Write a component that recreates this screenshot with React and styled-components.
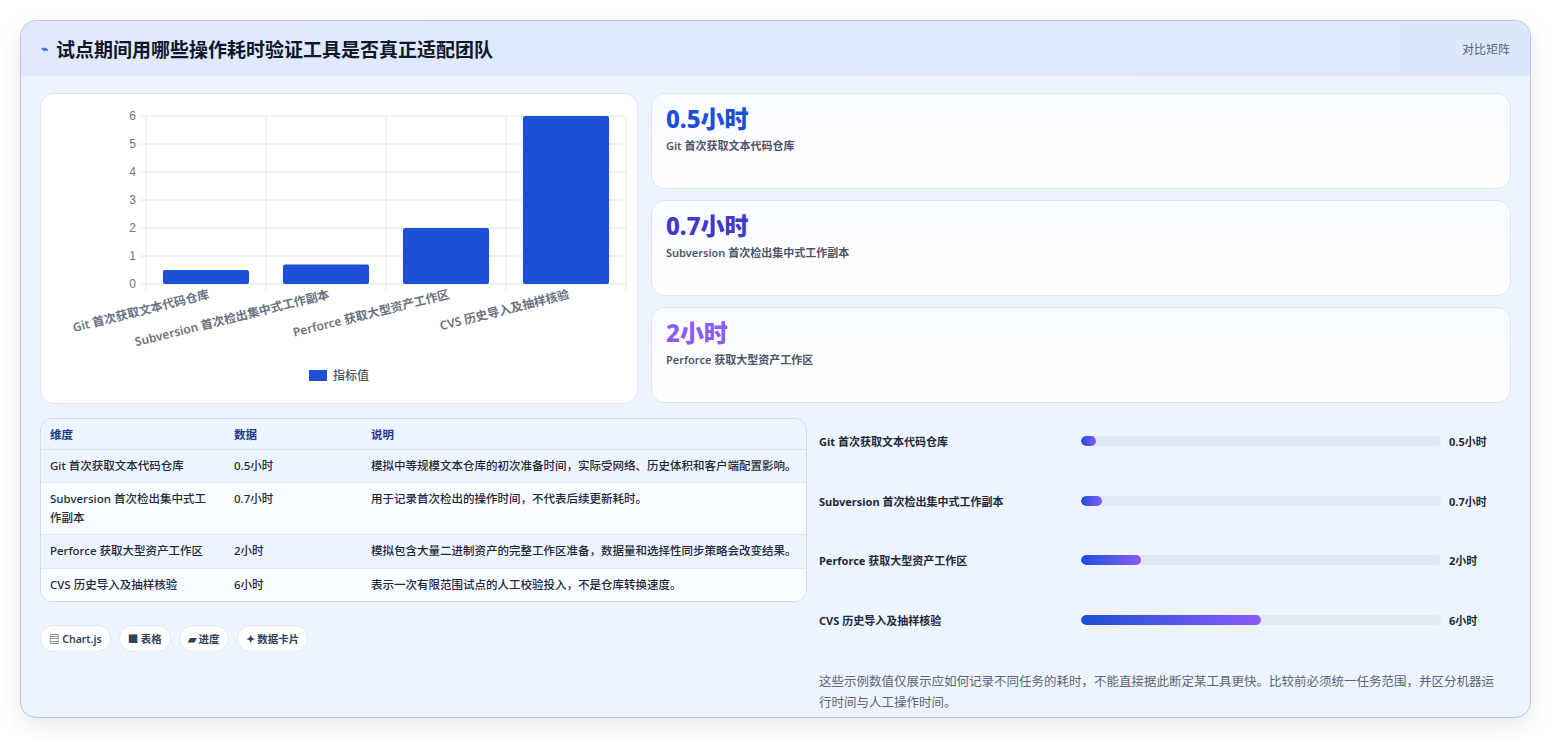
import React from "react";
import styled, { createGlobalStyle } from "styled-components";

const FONT = `"Noto Sans", "Noto Sans CJK SC", sans-serif`;

const Global = createGlobalStyle`
	body { margin: 0; background: #fff; font-family: ${ FONT }; }
`;

const rows = [
	{ name: "Git 首次获取文本代码仓库", value: 0.5, note: "模拟中等规模文本仓库的初次准备时间，实际受网络、历史体积和客户端配置影响。" },
	{ name: "Subversion 首次检出集中式工作副本", value: 0.7, note: "用于记录首次检出的操作时间，不代表后续更新耗时。" },
	{ name: "Perforce 获取大型资产工作区", value: 2, note: "模拟包含大量二进制资产的完整工作区准备，数据量和选择性同步策略会改变结果。" },
	{ name: "CVS 历史导入及抽样核验", value: 6, note: "表示一次有限范围试点的人工校验投入，不是仓库转换速度。" },
];

const Page = styled.div`
	padding: 20px;
	height: 739px;
	box-sizing: border-box;
`;

const Panel = styled.div`
	width: 1511px;
	height: 698px;
	box-sizing: border-box;
	border: 1px solid #b9c3ee;
	border-radius: 16px;
	background: #eef4fe;
	overflow: hidden;
	box-shadow: 0 8px 24px rgba(30, 40, 90, 0.1);
`;

const Header = styled.div`
	height: 55px;
	display: flex;
	align-items: center;
	justify-content: space-between;
	padding: 0 20px;
	background: linear-gradient(90deg, #e2e9fd, #dbe7fd);
`;

const Title = styled.h1`
	margin: 0;
	font-size: 19px;
	font-weight: 700;
	color: #0f172a;
	display: flex;
	align-items: center;
	gap: 8px;
`;

const Tag = styled.span`
	font-size: 12px;
	color: #5b6478;
`;

const Body = styled.div`
	padding: 17px 19px 18px 19px;
	display: flex;
	flex-direction: column;
	gap: 14px;
`;

const TopRow = styled.div`
	display: grid;
	grid-template-columns: 598px 1fr;
	gap: 13px;
`;

const Card = styled.div`
	background: #fff;
	border: 1px solid #dde5f5;
	border-radius: 14px;
`;

const ChartCard = styled(Card)`
	height: 309px;
`;

const Stats = styled.div`
	display: flex;
	flex-direction: column;
	gap: 11px;
`;

const Stat = styled(Card)`
	height: 96px;
	padding: 11px 14px;
	box-sizing: border-box;
	background: linear-gradient(180deg, #f8fbff, #fff);
`;

const StatValue = styled.div`
	font-size: 24px;
	font-weight: 800;
	color: ${ p => p.color };
	line-height: 1.2;
`;

const StatLabel = styled.div`
	font-size: 11px;
	font-weight: 600;
	color: #4b5568;
	margin-top: 3px;
`;

const BottomRow = styled.div`
	display: grid;
	grid-template-columns: 767px 1fr;
	gap: 12px;
`;

const Left = styled.div`
	display: flex;
	flex-direction: column;
	gap: 23px;
`;

const Table = styled.table`
	width: 100%;
	border-collapse: separate;
	border-spacing: 0;
	border: 1px solid #cfd8ea;
	border-radius: 12px;
	overflow: hidden;
	font-size: 11.5px;
	font-weight: 500;
	color: #1e293b;
	background: #fff;
`;

const Th = styled.th`
	text-align: left;
	font-weight: 600;
	color: #1e3a8a;
	padding: 7px 9px;
	background: #eef4fe;
	border-bottom: 1px solid #d8e0ef;
	width: ${ p => p.w || "auto" };
`;

const Td = styled.td`
	padding: 7px 9px;
	vertical-align: top;
	line-height: 1.6;
	background: ${ p => ( p.alt ? "#f8fbff" : "#eef4fe" ) };
	border-top: ${ p => ( p.first ? "none" : "1px solid #e3e8f2" ) };
`;

const Pills = styled.div`
	display: flex;
	gap: 8px;
`;

const Pill = styled.span`
	font-size: 10.5px;
	font-weight: 600;
	color: #334155;
	background: #fff;
	border: 1px solid #e2e8f0;
	border-radius: 14px;
	padding: 5px 8px;
`;

const Right = styled.div`
	display: flex;
	flex-direction: column;
	padding-top: 15px;
`;

const BarRow = styled.div`
	display: grid;
	grid-template-columns: 254px 360px 1fr;
	align-items: center;
	gap: 8px;
	height: 59.5px;
	align-content: start;
	font-size: 11px;
	font-weight: 700;
	color: #1e293b;
`;

const Track = styled.div`
	height: 10px;
	border-radius: 5px;
	background: #e2e8f2;
	overflow: hidden;
`;

const Fill = styled.div`
	height: 100%;
	border-radius: 5px;
	background: linear-gradient(90deg, #1d4ed8, #8b5cf6);
	min-width: 14px;
`;

const Note = styled.p`
	margin: 0;
	font-size: 12.5px;
	color: #5b6478;
	line-height: 1.7;
	padding-right: 10px;
`;

const Chart = () => {
	const x0 = 105, x1 = 585, y0 = 190, step = 28;
	const ticks = [0, 1, 2, 3, 4, 5, 6];
	return (
		<svg width="598" height="309" style={ { display: "block" } }>
			{ ticks.map(t => (
				<g key={ t }>
					<line x1={ x0 - 6 } x2={ x1 } y1={ y0 - t * step } y2={ y0 - t * step } stroke="#e3e6eb" />
					<text x={ x0 - 10 } y={ y0 - t * step + 4 } fontSize="12" fill="#6b7280" textAnchor="end" fontFamily="Liberation Sans, sans-serif">{ t }</text>
				</g>
			)) }
			{ [0, 1, 2, 3, 4].map(i => (
				<line key={ i } x1={ x0 + i * 120 } x2={ x0 + i * 120 } y1={ y0 - 6 * step } y2={ y0 + 8 } stroke="#e3e6eb" />
			)) }
			{ rows.map((r, i) => (
				<rect key={ i } x={ x0 + i * 120 + 17 } width="86" y={ y0 - r.value * step } height={ r.value * step } rx="2" fill="#1d4ed8" />
			)) }
			{ rows.map((r, i) => (
				<text key={ i } fontSize="12" fontWeight="600" fill="#6b7280" textAnchor="end" fontFamily={ FONT }
					transform={ `translate(${ x0 + i * 120 + 64 } ${ y0 + 14 }) rotate(-14)` }>{ r.name }</text>
			)) }
			<rect x="268" y="276" width="18" height="11" fill="#1d4ed8" />
			<text x="292" y="286" fontSize="12" fontWeight="500" fill="#555" fontFamily={ FONT }>指标值</text>
		</svg>
	);
};

const App = () => (
	<Page>
		<Global />
		<Panel>
			<Header>
				<Title><span style={ { color: "#2563eb", fontSize: 12 } }>⌁</span>试点期间用哪些操作耗时验证工具是否真正适配团队</Title>
				<Tag>对比矩阵</Tag>
			</Header>
			<Body>
				<TopRow>
					<ChartCard><Chart /></ChartCard>
					<Stats>
						{ rows.slice(0, 3).map((r, i) => (
							<Stat key={ i }>
								<StatValue color={ ["#1d4ed8", "#4338ca", "#8b5cf6"][i] }>{ r.value }小时</StatValue>
								<StatLabel>{ r.name }</StatLabel>
							</Stat>
						)) }
					</Stats>
				</TopRow>
				<BottomRow>
					<Left>
						<Table>
							<thead>
								<tr><Th w="166px">维度</Th><Th w="119px">数据</Th><Th>说明</Th></tr>
							</thead>
							<tbody>
								{ rows.map((r, i) => (
									<tr key={ i }>
										<Td alt={ i % 2 === 1 } first={ i === 0 }>{ r.name }</Td>
										<Td alt={ i % 2 === 1 } first={ i === 0 }>{ r.value }小时</Td>
										<Td alt={ i % 2 === 1 } first={ i === 0 }>{ r.note }</Td>
									</tr>
								)) }
							</tbody>
						</Table>
						<Pills>
							<Pill>▤ Chart.js</Pill>
							<Pill>■ 表格</Pill>
							<Pill>▰ 进度</Pill>
							<Pill>✦ 数据卡片</Pill>
						</Pills>
					</Left>
					<Right>
						{ rows.map((r, i) => (
							<BarRow key={ i }>
								<span>{ r.name }</span>
								<Track><Fill style={ { width: `${ (r.value / 12) * 100 }%` } } /></Track>
								<span>{ r.value }小时</span>
							</BarRow>
						)) }
						<Note>这些示例数值仅展示应如何记录不同任务的耗时，不能直接据此断定某工具更快。比较前必须统一任务范围，并区分机器运行时间与人工操作时间。</Note>
					</Right>
				</BottomRow>
			</Body>
		</Panel>
	</Page>
);

export default App;
